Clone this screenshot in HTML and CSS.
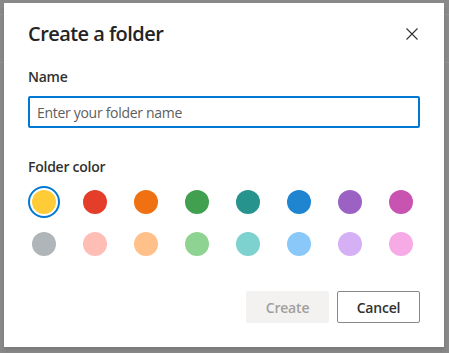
FILE: index.html
```html
<!DOCTYPE html>
<html lang="en">
<head>
  <meta charset="UTF-8" />
  <meta name="viewport" content="width=device-width, initial-scale=1.0"/>
  <title>Create a folder</title>
  <link rel="stylesheet" href="styles.css">
</head>
<body>

  <!-- Dialog -->
  <div class="dialog">
    <div class="dialog-header">
      <h2>Create a folder</h2>
      <button class="btn-close" aria-label="Close">
        <svg width="12" height="12" viewBox="0 0 12 12">
          <path d="M0.5 0.5 L11.5 11.5 M11.5 0.5 L0.5 11.5" stroke="#323130" stroke-width="1.1" fill="none"/>
        </svg>
      </button>
    </div>

    <label class="field-label" for="folderName">Name</label>
    <input type="text" id="folderName" class="name-input" placeholder="Enter your folder name" />

    <div class="field-label color-label">Folder color</div>
    <div class="swatches">
      <span class="swatch selected"><i style="background:#ffcc38"></i></span>
      <span class="swatch"><i style="background:#e43e2b"></i></span>
      <span class="swatch"><i style="background:#ef7112"></i></span>
      <span class="swatch"><i style="background:#41a04f"></i></span>
      <span class="swatch"><i style="background:#26938c"></i></span>
      <span class="swatch"><i style="background:#1f85d0"></i></span>
      <span class="swatch"><i style="background:#9b62c4"></i></span>
      <span class="swatch"><i style="background:#c953b0"></i></span>

      <span class="swatch"><i style="background:#afb5b8"></i></span>
      <span class="swatch"><i style="background:#febdb5"></i></span>
      <span class="swatch"><i style="background:#ffc08a"></i></span>
      <span class="swatch"><i style="background:#8fd392"></i></span>
      <span class="swatch"><i style="background:#7dd1ce"></i></span>
      <span class="swatch"><i style="background:#89c8f8"></i></span>
      <span class="swatch"><i style="background:#d6b0f4"></i></span>
      <span class="swatch"><i style="background:#f6aae6"></i></span>
    </div>

    <div class="actions">
      <button class="btn btn-create" disabled>Create</button>
      <button class="btn btn-cancel">Cancel</button>
    </div>
  </div>

</body>
</html>
```

FILE: styles.css
```css
body {
  margin: 0;
  height: 353px;
  overflow: hidden;
  font-family: 'Open Sans', 'Noto Sans', sans-serif;
  color: #323130;
  background:
    linear-gradient(to bottom, transparent 14px, #939393 14px, #939393 15px, transparent 15px,
                    transparent 62px, #939393 62px, #939393 63px, transparent 63px),
    #898989;
}

/* Dialog box */
.dialog {
  margin: 3px 0 0 4px;
  width: 440px;
  height: 344px;
  box-sizing: border-box;
  padding: 17px 24px 24px;
  background: #fff;
  box-shadow: 0 3px 4px rgba(0, 0, 0, 0.12);
  display: flex;
  flex-direction: column;
}

.dialog-header {
  display: flex;
  justify-content: space-between;
  align-items: center;
  height: 28px;
}

.dialog-header h2 {
  margin: 0;
  font-size: 20px;
  font-weight: 600;
  line-height: 28px;
  letter-spacing: -0.55px;
  color: #242424;
}

.btn-close {
  width: 16px;
  height: 16px;
  padding: 2px;
  border: none;
  background: none;
  display: flex;
  align-items: center;
  justify-content: center;
  cursor: pointer;
}

/* Form fields */
.field-label {
  display: block;
  margin-top: 19px;
  font-size: 14px;
  font-weight: 600;
  line-height: 20px;
  letter-spacing: -0.25px;
}

.name-input {
  margin-top: 9px;
  height: 32px;
  box-sizing: border-box;
  padding: 0 7px;
  border: 2px solid #0078d4;
  border-radius: 2px;
  font-family: inherit;
  font-size: 14px;
  letter-spacing: -0.3px;
  color: #323130;
  outline: none;
}

.name-input::placeholder {
  color: #605e5c;
}

.color-label {
  margin-top: 29px;
}

/* Color swatches */
.swatches {
  margin-top: 9px;
  display: grid;
  grid-template-columns: repeat(8, 32px);
  column-gap: 19px;
  row-gap: 10px;
}

.swatch {
  width: 32px;
  height: 32px;
  box-sizing: border-box;
  border-radius: 50%;
  display: flex;
  align-items: center;
  justify-content: center;
  cursor: pointer;
}

.swatch i {
  width: 24px;
  height: 24px;
  border-radius: 50%;
}

.swatch.selected {
  border: 2px solid #0078d4;
}

/* Buttons */
.actions {
  margin-top: auto;
  display: flex;
  justify-content: flex-end;
  gap: 8px;
}

.btn {
  width: 83px;
  height: 32px;
  box-sizing: border-box;
  border-radius: 2px;
  font-family: inherit;
  font-size: 14px;
  font-weight: 600;
  letter-spacing: -0.2px;
}

.btn-create {
  background: #f3f2f1;
  border: 1px solid #f3f2f1;
  color: #a19f9d;
}

.btn-cancel {
  background: #fff;
  border: 1px solid #8a8886;
  color: #323130;
  cursor: pointer;
}
```
